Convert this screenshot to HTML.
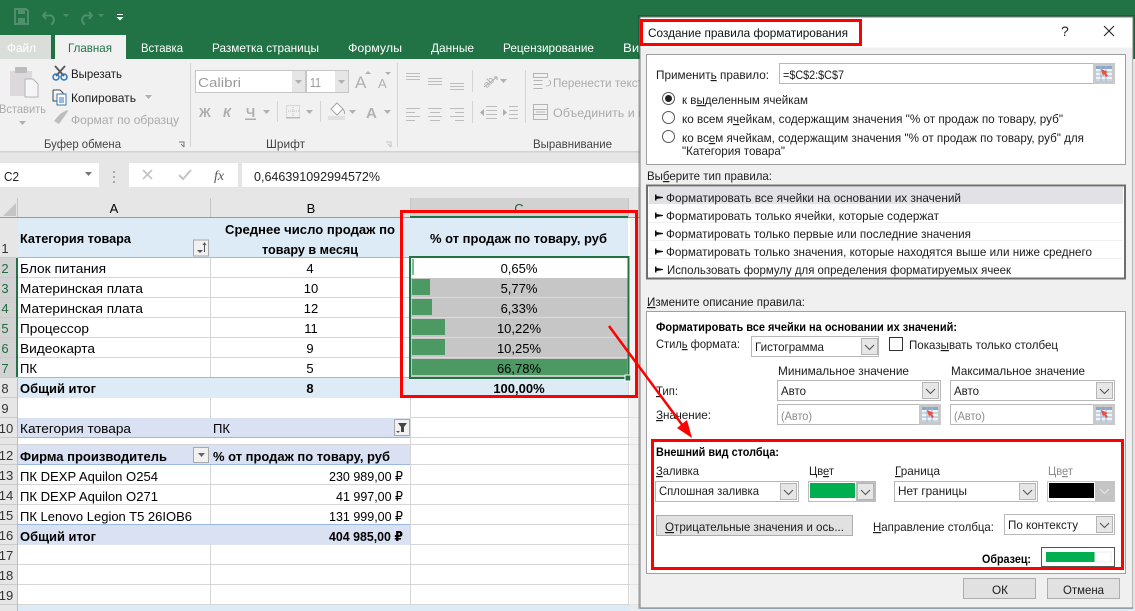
<!DOCTYPE html>
<html lang="ru"><head><meta charset="utf-8"><title>Создание правила форматирования</title>
<style>
html,body{margin:0;padding:0;background:#fff;overflow:hidden}
svg{display:block}
text{font-family:"Liberation Sans","DejaVu Sans",sans-serif;font-size:12px;fill:#1c1c1c}
.c{font-size:13px;fill:#000}
.b{font-size:13px;font-weight:bold;fill:#000}
.m{text-anchor:middle}
.db{font-weight:bold;fill:#000}
.rh{font-size:13px;fill:#333;text-anchor:middle}
.rs{font-size:13px;fill:#1e6b41;text-anchor:middle}
.tab{fill:#fff;font-size:12px}
.g{fill:#ababab}
.u{text-decoration:underline}
</style></head><body>
<svg width="1135" height="611" viewBox="0 0 1135 611" xmlns="http://www.w3.org/2000/svg">
<defs>
<symbol id="pick" width="22" height="21" viewBox="0 0 22 21"><rect width="22" height="21" fill="#c9c9c9"/><rect x="3" y="3" width="16" height="15" fill="#eef3f8"/><path d="M3 3h16v3H3z" fill="#8aa8cc"/><path d="M3 9h16M3 13h16M3 17h16M8 3v15M13 3v15" stroke="#9db6d4" stroke-width="1" fill="none"/><path d="M8 6l7 3-2 1 2 3-2 1-2-3-1 2z" fill="#e8503f"/></symbol>
<symbol id="chev" width="17" height="17" viewBox="0 0 17 17"><rect x=".5" y=".5" width="16" height="16" fill="#e6e6e6" stroke="#b5b5b5"/><path d="M4 7l4.500 4.500L13 7" stroke="#555" stroke-width="1.100" fill="none"/></symbol>
<symbol id="da" width="7" height="5" viewBox="0 0 7 5"><path d="M0 0h7L3.500 4z" fill="#b0b0b0"/></symbol>
<symbol id="fl" width="9" height="7" viewBox="0 0 9 7"><path d="M0 .5h1.500V2L8 3v1L1.500 5v1.500H0z" fill="#111"/></symbol>
</defs>

<!-- title/tab band -->
<rect width="1135" height="59" fill="#217346"/>
<path d="M15 9h11l2 2v13H15z" fill="none" stroke="#4f8f6e" stroke-width="2"/><rect x="18" y="9" width="7" height="5" fill="#4f8f6e"/><rect x="18" y="18" width="7" height="6" fill="#4f8f6e"/>
<path d="M46 12l-3 3.500 3 3.500M43.500 15.500H51a5 5 0 0 1 0 9" fill="none" stroke="#4f8f6e" stroke-width="2"/><path d="M63 14h6l-3 3z" fill="#4f8f6e"/>
<path d="M89 12l3 3.500-3 3.500M91.500 15.500H85a5 5 0 0 0 0 9" fill="none" stroke="#4f8f6e" stroke-width="2"/><path d="M98 14h6l-3 3z" fill="#4f8f6e"/>
<rect x="117" y="14" width="6" height="1" fill="#fff"/><path d="M116.500 17h7L120 20.500z" fill="#fff"/>
<rect x="0" y="35" width="51" height="24" fill="#d9dedb"/>
<text x="7" y="52" textLength="29" lengthAdjust="spacingAndGlyphs" style="fill:#fff">Файл</text>
<rect x="55" y="35" width="71" height="24" fill="#f1f1f1"/>
<text x="68" y="52" textLength="44" lengthAdjust="spacingAndGlyphs" style="fill:#217346">Главная</text>
<text class="tab" x="141" y="52" textLength="42" lengthAdjust="spacingAndGlyphs">Вставка</text>
<text class="tab" x="212" y="52" textLength="107" lengthAdjust="spacingAndGlyphs">Разметка страницы</text>
<text class="tab" x="348" y="52" textLength="54" lengthAdjust="spacingAndGlyphs">Формулы</text>
<text class="tab" x="431" y="52" textLength="43" lengthAdjust="spacingAndGlyphs">Данные</text>
<text class="tab" x="503" y="52" textLength="91" lengthAdjust="spacingAndGlyphs">Рецензирование</text>
<text class="tab" x="623" y="52" textLength="24" lengthAdjust="spacingAndGlyphs">Вид</text>

<!-- ribbon -->
<rect y="59" width="1135" height="93" fill="#f1f1f1"/>
<rect y="151" width="1135" height="1.500" fill="#d2d2d2"/>
<rect x="190" y="63" width="1" height="84" fill="#d4d4d4"/><rect x="397" y="63" width="1" height="84" fill="#d4d4d4"/>
<!-- clipboard -->
<rect x="10" y="71" width="22" height="25" fill="#dcd8dc"/><rect x="15" y="67" width="12" height="6" rx="1" fill="#bcbcbc"/><path d="M25 79h8l5 5v13H25z" fill="#f6f4f7" stroke="#b4b4b4"/>
<text x="-1" y="113" textLength="47" lengthAdjust="spacingAndGlyphs" class="g">Вставить</text>
<use href="#da" x="19" y="121"/>
<path d="M55 66l9 10M65 66l-9 10" stroke="#555" stroke-width="1.800"/><circle cx="56" cy="77" r="3" fill="none" stroke="#2f75b5" stroke-width="1.500"/><circle cx="64" cy="77" r="3" fill="none" stroke="#2f75b5" stroke-width="1.500"/>
<text x="71" y="78" textLength="51" lengthAdjust="spacingAndGlyphs">Вырезать</text>
<path d="M53 90h7l3 3v8" fill="#fff" stroke="#444"/><path d="M53 90v11h4" fill="none" stroke="#444"/><rect x="57" y="94" width="9" height="11" fill="#fff" stroke="#2f75b5"/><path d="M59 98h5M59 100h5M59 102h5" stroke="#2f75b5"/>
<text x="71" y="102" textLength="65" lengthAdjust="spacingAndGlyphs">Копировать</text>
<use href="#da" x="145" y="95"/>
<path d="M54 121l6-7 4 3-5 7zM60 114l7-4 1 1-4 6" fill="#bdbdbd"/>
<text x="71" y="124" textLength="108" lengthAdjust="spacingAndGlyphs" class="g">Формат по образцу</text>
<text x="44" y="148" textLength="77" lengthAdjust="spacingAndGlyphs" style="fill:#444">Буфер обмена</text>
<path d="M179 142h5v5M181 144l3 3" stroke="#777" fill="none"/>
<!-- font -->
<rect x="195.500" y="70.500" width="110" height="22" fill="#fff" stroke="#c6c6c6"/><rect x="292" y="71" width="13" height="21" fill="#e6e6e6"/><use href="#da" x="295" y="80"/>
<rect x="306.500" y="70.500" width="42" height="22" fill="#fff" stroke="#c6c6c6"/><rect x="335" y="71" width="13" height="21" fill="#e6e6e6"/><use href="#da" x="338" y="80"/>
<text x="198" y="87" textLength="43" lengthAdjust="spacingAndGlyphs" style="font-size:13px;fill:#999">Calibri</text>
<text x="310" y="87" textLength="11" lengthAdjust="spacingAndGlyphs" style="font-size:13px;fill:#999">11</text>
<text x="355" y="88" style="font-size:17px;fill:#b0b0b0">A</text><path d="M365 74h6l-3-3z" fill="#b0b0b0"/>
<text x="378" y="88" style="font-size:13px;fill:#b0b0b0">A</text><path d="M385 72h6l-3 3z" fill="#b0b0b0"/>
<text x="199" y="117" style="font-size:13px;font-weight:bold;fill:#adadad">Ж</text>
<text x="223" y="117" style="font-size:13px;font-weight:bold;font-style:italic;fill:#adadad">К</text>
<text x="246" y="117" style="font-size:13px;font-weight:bold;fill:#adadad">Ч</text><rect x="245" y="118.500" width="11" height="1.500" fill="#adadad"/>
<use href="#da" x="263" y="110"/><rect x="277" y="101" width="1" height="21" fill="#d4d4d4"/>
<rect x="286.500" y="105.500" width="13" height="12" fill="none" stroke="#c0c0c0" stroke-dasharray="1 1"/><path d="M293 105v13M286 111h14" stroke="#c0c0c0" stroke-dasharray="1 1"/><rect x="286" y="117" width="14" height="1.500" fill="#b8b8b8"/>
<use href="#da" x="306" y="110"/><rect x="320" y="101" width="1" height="21" fill="#d4d4d4"/>
<path d="M331 109l6-6 6 6-6 6z" fill="#fff" stroke="#a5a5a5"/><path d="M343 109c2 3 2 4 1 5" stroke="#a5a5a5" fill="none"/><rect x="328" y="116" width="17" height="4" fill="#e0e0e0"/>
<use href="#da" x="349" y="110"/>
<text x="366" y="118" style="font-size:15px;font-weight:bold;fill:#b2b2b2">A</text>
<use href="#da" x="384" y="110"/>
<text x="266" y="148" textLength="39" lengthAdjust="spacingAndGlyphs" style="fill:#444">Шрифт</text>
<path d="M386 142h5v5M388 144l3 3" stroke="#c4c4c4" fill="none"/>
<!-- alignment -->
<path d="M406 73.500h14M406 76.500h14M406 79.500h14M428 78.500h14M428 81.500h14M428 84.500h14M450 83.500h14M450 86.500h14M450 89.500h14" stroke="#bdbdbd"/>
<path d="M406 108.500h14M406 112.500h9M406 116.500h14M406 120.500h9M428 108.500h14M430 112.500h10M428 116.500h14M430 120.500h10M450 108.500h14M455 112.500h9M450 116.500h14M455 120.500h9" stroke="#bdbdbd"/>
<rect x="472" y="70" width="1" height="22" fill="#d4d4d4"/><rect x="472" y="101" width="1" height="22" fill="#d4d4d4"/>
<text x="481" y="86" transform="rotate(-45 487 80)" style="font-size:10px;fill:#adadad">ab</text><path d="M484 87l13-10m-3 0h3v3" stroke="#adadad" fill="none"/>
<use href="#da" x="500" y="79"/>
<path d="M486 106.500h11M486 110.500h11M486 114.500h11M486 118.500h11M509 106.500h9M509 110.500h9M509 114.500h9M509 118.500h9" stroke="#bdbdbd"/><path d="M484 109l-4 3.500 4 3.500zM503 109l4 3.500-4 3.500z" fill="#adadad"/>
<rect x="525" y="70" width="1" height="53" fill="#d4d4d4"/>
<path d="M533.500 73.500h14v4h-14zM533.500 80.500h9M533.500 84.500h9M533.500 88.500h9M549 80c3 2 2 6-3 6" fill="none" stroke="#b4b4b4"/>
<text x="553" y="87" textLength="90" lengthAdjust="spacingAndGlyphs" class="g">Перенести текст</text>
<rect x="533.500" y="104.500" width="14" height="15" fill="none" stroke="#b4b4b4"/><path d="M533.500 109.500h14M533.500 114.500h14M536 112h9" stroke="#b4b4b4"/>
<text x="553" y="117" textLength="92" lengthAdjust="spacingAndGlyphs" class="g">Объединить и п</text>
<text x="533" y="148" textLength="79" lengthAdjust="spacingAndGlyphs" style="fill:#444">Выравнивание</text>

<!-- formula bar -->
<rect y="152.500" width="1135" height="46" fill="#e6e6e6"/>
<rect x="0" y="163" width="99" height="24" fill="#fff"/>
<text x="4" y="181" textLength="15" lengthAdjust="spacingAndGlyphs" style="font-size:13px;fill:#222">C2</text>
<path d="M85 172h7l-3.500 4z" fill="#777"/>
<path d="M114 171v2M114 176v2M114 181v2" stroke="#aaa" stroke-width="2"/>
<rect x="129" y="163" width="109" height="24" fill="#fff"/>
<path d="M143 170l9 9M152 170l-9 9" stroke="#c4c4c4" stroke-width="1.700"/>
<path d="M179 175l4 4 8-9" stroke="#c4c4c4" stroke-width="2" fill="none"/>
<text x="214" y="180" style="font-family:'Liberation Serif',serif;font-size:14px;font-style:italic;fill:#555">fx</text>
<rect x="242" y="163" width="400" height="24" fill="#fff"/>
<text x="254" y="181" textLength="126" lengthAdjust="spacingAndGlyphs" style="font-size:13px;fill:#222">0,646391092994572%</text>

<!-- sheet -->
<rect y="198" width="1135" height="413" fill="#fff"/>
<rect y="198" width="18" height="413" fill="#e6e6e6"/>
<rect x="18" y="198" width="392" height="20" fill="#e6e6e6"/><rect x="410" y="198" width="218" height="20" fill="#d2d2d2"/><rect x="628" y="198" width="12" height="20" fill="#e6e6e6"/>
<path d="M3 216l13-13v13z" fill="#c4c4c4"/>
<path d="M17.500 198v20M210.500 198v20M410.500 198v20M628.500 198v20" stroke="#c6c6c6"/>
<rect y="217" width="640" height="1" fill="#9a9a9a"/>
<text x="114" y="213" class="c m">A</text><text x="311" y="213" class="c m">B</text><text x="519" y="213" class="c m" style="fill:#1e5c3a">C</text>
<rect x="410" y="216" width="218" height="2" fill="#217346"/>
<!-- row header highlight -->
<rect y="258" width="17" height="120" fill="#d2d2d2"/><rect x="16" y="258" width="2" height="120" fill="#217346"/>
<!-- fills -->
<rect x="18" y="218" width="610" height="40" fill="#ddebf7"/><rect x="18" y="378" width="610" height="20" fill="#ddebf7"/>
<rect x="18" y="418" width="392" height="20" fill="#d9e1f2"/><rect x="18" y="445" width="392" height="20" fill="#d9e1f2"/><rect x="18" y="525" width="392" height="20" fill="#d9e1f2"/>
<rect x="18" y="605" width="1117" height="6" fill="#ddebf7"/>
<!-- grid -->
<path d="M18 277.500H410M18 297.500H410M18 317.500H410M18 337.500H410M18 357.500H410M210.500 258v120M210.500 398v20M18 484.500H410M18 504.500H410M210.500 465v60M18 564.500H640M18 584.500H640M18 604.500H640M210.500 545v60M410.500 398v207M628.500 258v347M410 417.500H640M410 437.500H640M410 444.500H640M410 464.500H640M410 484.500H640M410 504.500H640M410 524.500H640M410 544.500H640M18 444.500H410" stroke="#d6d6d6"/>
<path d="M18 257.500H628M18 377.500H628M18 437.500H410M18 464.500H410M18 524.500H410" stroke="#9bb9e0"/>
<path d="M0 277.500H16M0 297.500H16M0 317.500H16M0 337.500H16M0 357.500H16M0 377.500H18M0 397.500H18M0 417.500H18M0 437.500H18M0 444.500H18M0 464.500H18M0 484.500H18M0 504.500H18M0 524.500H18M0 544.500H18M0 564.500H18M0 584.500H18M0 604.500H18M0 257.500H18" stroke="#cbcbcb"/>
<path d="M17.500 378V611" stroke="#bdbdbd"/>
<!-- row numbers -->
<text x="5" y="253" class="rh">1</text><text x="5" y="273" class="rs">2</text><text x="5" y="293" class="rs">3</text><text x="5" y="313" class="rs">4</text><text x="5" y="333" class="rs">5</text><text x="5" y="353" class="rs">6</text><text x="5" y="373" class="rs">7</text><text x="5" y="393" class="rh">8</text><text x="5" y="413" class="rh">9</text>
<text x="6" y="433" class="rh">10</text><text x="6" y="460" class="rh">12</text><text x="6" y="480" class="rh">13</text><text x="6" y="500" class="rh">14</text><text x="6" y="520" class="rh">15</text><text x="6" y="540" class="rh">16</text><text x="6" y="560" class="rh">17</text><text x="6" y="580" class="rh">18</text><text x="6" y="600" class="rh">19</text>
<!-- table 1 text -->
<text x="20" y="243" textLength="111" lengthAdjust="spacingAndGlyphs" class="b">Категория товара</text>
<rect x="193.500" y="240" width="15" height="16" fill="#f1f1f1" stroke="#a8a8a8"/><path d="M197 250h6l-3 3z" fill="#555"/><path d="M204.500 243v9M203 245l1.500-2 1.500 2" stroke="#555" fill="none"/>
<text x="225" y="234" textLength="170" lengthAdjust="spacingAndGlyphs" class="b">Среднее число продаж по</text>
<text x="262" y="254" textLength="96" lengthAdjust="spacingAndGlyphs" class="b">товару в месяц</text>
<text x="430" y="243" textLength="177" lengthAdjust="spacingAndGlyphs" class="b">% от продаж по товару, руб</text>
<text x="20" y="273" textLength="86" lengthAdjust="spacingAndGlyphs" class="c">Блок питания</text><text x="310" y="273" class="c m">4</text>
<text x="20" y="293" textLength="123" lengthAdjust="spacingAndGlyphs" class="c">Материнская плата</text><text x="311" y="293" class="c m">10</text>
<text x="20" y="313" textLength="123" lengthAdjust="spacingAndGlyphs" class="c">Материнская плата</text><text x="311" y="313" class="c m">12</text>
<text x="20" y="333" textLength="69" lengthAdjust="spacingAndGlyphs" class="c">Процессор</text><text x="311" y="333" class="c m">11</text>
<text x="20" y="353" textLength="75" lengthAdjust="spacingAndGlyphs" class="c">Видеокарта</text><text x="310" y="353" class="c m">9</text>
<text x="20" y="373" textLength="17" lengthAdjust="spacingAndGlyphs" class="c">ПК</text><text x="310" y="373" class="c m">5</text>
<text x="20" y="393" textLength="76" lengthAdjust="spacingAndGlyphs" class="b">Общий итог</text><text x="310" y="393" class="b m">8</text>
<!-- data bars -->
<rect x="411" y="278" width="217" height="100" fill="#c6c6c6"/>
<path d="M411 297.500h217M411 317.500h217M411 337.500h217M411 357.500h217" stroke="#dcdcdc"/>
<rect x="412" y="259" width="2" height="16" fill="#74c08f"/>
<rect x="412" y="279" width="18" height="16" fill="#4c9963"/><rect x="412" y="299" width="20" height="16" fill="#4c9963"/><rect x="412" y="319" width="33" height="16" fill="#4c9963"/><rect x="412" y="339" width="33" height="16" fill="#4c9963"/><rect x="412" y="359" width="215" height="16" fill="#4c9963"/>
<rect x="410" y="257" width="218.500" height="121" fill="none" stroke="#217346" stroke-width="2"/>
<rect x="625" y="375" width="6" height="6" fill="#217346" stroke="#fff" stroke-width="1"/>
<text x="519" y="273" class="c m">0,65%</text><text x="519" y="293" class="c m">5,77%</text><text x="519" y="313" class="c m">6,33%</text><text x="519" y="333" class="c m">10,22%</text><text x="519" y="353" class="c m">10,25%</text><text x="519" y="373" class="c m">66,78%</text><text x="519" y="393" class="b m">100,00%</text>
<!-- table 2 -->
<text x="20" y="433" textLength="111" lengthAdjust="spacingAndGlyphs" class="c">Категория товара</text>
<text x="213" y="433" textLength="17" lengthAdjust="spacingAndGlyphs" class="c">ПК</text>
<rect x="394.500" y="419.500" width="15" height="16" fill="#f1f1f1" stroke="#a8a8a8"/><path d="M398 423h9l-3 4v5h-3v-5z" fill="#444"/><path d="M396 431h4l-2 2z" fill="#555"/>
<text x="20" y="461" textLength="147" lengthAdjust="spacingAndGlyphs" class="b">Фирма производитель</text>
<rect x="193.500" y="447.500" width="15" height="15" fill="#f1f1f1" stroke="#a8a8a8"/><path d="M198 453h7l-3.500 4z" fill="#666"/>
<text x="213" y="461" textLength="177" lengthAdjust="spacingAndGlyphs" class="b">% от продаж по товару, руб</text>
<text x="20" y="481" textLength="138" lengthAdjust="spacingAndGlyphs" class="c">ПК DEXP Aquilon O254</text><text x="329" y="481" textLength="74" lengthAdjust="spacingAndGlyphs" class="c">230 989,00 ₽</text>
<text x="20" y="501" textLength="138" lengthAdjust="spacingAndGlyphs" class="c">ПК DEXP Aquilon O271</text><text x="336" y="501" textLength="67" lengthAdjust="spacingAndGlyphs" class="c">41 997,00 ₽</text>
<text x="20" y="521" textLength="172" lengthAdjust="spacingAndGlyphs" class="c">ПК Lenovo Legion T5 26IOB6</text><text x="329" y="521" textLength="74" lengthAdjust="spacingAndGlyphs" class="c">131 999,00 ₽</text>
<text x="20" y="541" textLength="76" lengthAdjust="spacingAndGlyphs" class="b">Общий итог</text><text x="329" y="541" textLength="74" lengthAdjust="spacingAndGlyphs" class="b">404 985,00 ₽</text>
<rect x="630" y="218" width="10" height="393" fill="#ececec" opacity=".65"/>

<!-- red rect sheet -->
<rect x="401.500" y="211.500" width="235" height="185" fill="none" stroke="#f00" stroke-width="3"/>

<!-- dialog -->
<rect x="638" y="15" width="497" height="594" fill="#000" opacity=".18"/>
<rect x="640" y="17" width="493" height="591" fill="#f0f0f0" stroke="#7c7c7c" stroke-width="1"/>
<rect x="640.500" y="17.500" width="492" height="30" fill="#fff"/>
<rect x="1133" y="59" width="2" height="550" fill="#e4e4e4"/>
<text x="648" y="37" textLength="200" lengthAdjust="spacingAndGlyphs" style="fill:#111">Создание правила форматирования</text>
<rect x="641.500" y="20.500" width="219" height="24" fill="none" stroke="#f00" stroke-width="3"/>
<text x="1061" y="36" style="font-size:14px;fill:#222">?</text>
<path d="M1104 26l10 10M1114 26l-10 10" stroke="#222" stroke-width="1.100"/>

<rect x="646.500" y="54.500" width="479" height="110" fill="#fff" stroke="#a0a0a0"/>
<text x="656" y="79" textLength="113" lengthAdjust="spacingAndGlyphs">Применит<tspan class="u">ь</tspan> правило:</text>
<rect x="779.500" y="63.500" width="335" height="20" fill="#fff" stroke="#b8b8b8"/>
<text x="783" y="79" textLength="61" lengthAdjust="spacingAndGlyphs">=$C$2:$C$7</text>
<use href="#pick" x="1093" y="63"/>
<circle cx="668.500" cy="98.500" r="6" fill="#fff" stroke="#555"/><circle cx="668.500" cy="98.500" r="3.500" fill="#222"/>
<circle cx="668.500" cy="117.500" r="6" fill="#fff" stroke="#555"/><circle cx="668.500" cy="136.500" r="6" fill="#fff" stroke="#555"/>
<text x="682" y="104" textLength="126" lengthAdjust="spacingAndGlyphs">к в<tspan class="u">ы</tspan>деленным ячейкам</text>
<text x="682" y="123" textLength="381" lengthAdjust="spacingAndGlyphs">ко всем я<tspan class="u">ч</tspan>ейкам, содержащим значения "% от продаж по товару, руб"</text>
<text x="682" y="142" textLength="402" lengthAdjust="spacingAndGlyphs">ко вс<tspan class="u">е</tspan>м ячейкам, содержащим значения "% от продаж по товару, руб" для</text>
<text x="682" y="155" textLength="103" lengthAdjust="spacingAndGlyphs">"Категория товара"</text>

<text x="647" y="180" textLength="125" lengthAdjust="spacingAndGlyphs">Вы<tspan class="u">б</tspan>ерите тип правила:</text>
<rect x="647" y="185.500" width="478" height="93" fill="#fff" stroke="#6e6e6e" stroke-width="2"/>
<rect x="649" y="187" width="474" height="17" fill="#e1e1e6"/>
<path d="M649 222.500h474M649 240.500h474M649 258.500h474" stroke="#f0f0f0"/>
<use href="#fl" x="655" y="194"/><use href="#fl" x="655" y="212"/><use href="#fl" x="655" y="230"/><use href="#fl" x="655" y="248"/><use href="#fl" x="655" y="266"/>
<text x="666" y="202" textLength="295" lengthAdjust="spacingAndGlyphs">Форматировать все ячейки на основании их значений</text>
<text x="666" y="220" textLength="273" lengthAdjust="spacingAndGlyphs">Форматировать только ячейки, которые содержат</text>
<text x="666" y="238" textLength="305" lengthAdjust="spacingAndGlyphs">Форматировать только первые или последние значения</text>
<text x="666" y="256" textLength="426" lengthAdjust="spacingAndGlyphs">Форматировать только значения, которые находятся выше или ниже среднего</text>
<text x="667" y="274" textLength="344" lengthAdjust="spacingAndGlyphs">Использовать формулу для определения форматируемых ячеек</text>

<text x="647" y="306" textLength="158" lengthAdjust="spacingAndGlyphs"><tspan class="u">И</tspan>змените описание правила:</text>
<rect x="646.500" y="311.500" width="479" height="262" fill="#fff" stroke="#a0a0a0"/>
<text x="656" y="331" textLength="301" lengthAdjust="spacingAndGlyphs" class="db">Форматировать все ячейки на основании их значений:</text>
<text x="656" y="348" textLength="84" lengthAdjust="spacingAndGlyphs">Стил<tspan class="u">ь</tspan> формата:</text>
<rect x="751.500" y="336.500" width="127" height="20" fill="#fff" stroke="#b8b8b8"/><text x="755" y="351" textLength="69" lengthAdjust="spacingAndGlyphs">Гистограмма</text><use href="#chev" x="861" y="338"/>
<rect x="889.500" y="337.500" width="13" height="13" fill="#fff" stroke="#333"/>
<text x="909" y="349" textLength="149" lengthAdjust="spacingAndGlyphs">Показ<tspan class="u">ы</tspan>вать только столбец</text>
<text x="778" y="375" textLength="131" lengthAdjust="spacingAndGlyphs">Минимальное значение</text>
<text x="951" y="375" textLength="134" lengthAdjust="spacingAndGlyphs">Максимальное значение</text>
<text x="656" y="395" textLength="22" lengthAdjust="spacingAndGlyphs"><tspan class="u">Т</tspan>ип:</text>
<rect x="777.500" y="380.500" width="163" height="20" fill="#fff" stroke="#b8b8b8"/><text x="781" y="395" textLength="25" lengthAdjust="spacingAndGlyphs">Авто</text><use href="#chev" x="922" y="382"/>
<rect x="950.500" y="380.500" width="164" height="20" fill="#fff" stroke="#b8b8b8"/><text x="954" y="395" textLength="25" lengthAdjust="spacingAndGlyphs">Авто</text><use href="#chev" x="1096" y="382"/>
<text x="656" y="419" textLength="55" lengthAdjust="spacingAndGlyphs"><tspan class="u">З</tspan>начение:</text>
<rect x="777.500" y="404.500" width="163" height="20" fill="#fff" stroke="#b8b8b8"/><text x="781" y="420" textLength="31" lengthAdjust="spacingAndGlyphs" style="fill:#8a8a8a">(Авто)</text><use href="#pick" x="919" y="404"/>
<rect x="950.500" y="404.500" width="164" height="20" fill="#fff" stroke="#b8b8b8"/><text x="954" y="420" textLength="31" lengthAdjust="spacingAndGlyphs" style="fill:#8a8a8a">(Авто)</text><use href="#pick" x="1093" y="404"/>

<text x="656" y="456" textLength="123" lengthAdjust="spacingAndGlyphs" class="db">Внешний вид столбца:</text>
<text x="656" y="475" textLength="43" lengthAdjust="spacingAndGlyphs"><tspan class="u">З</tspan>аливка</text>
<text x="809" y="475" textLength="25" lengthAdjust="spacingAndGlyphs">Цв<tspan class="u">е</tspan>т</text>
<text x="895" y="475" textLength="45" lengthAdjust="spacingAndGlyphs"><tspan class="u">Г</tspan>раница</text>
<text x="1048" y="475" textLength="25" lengthAdjust="spacingAndGlyphs" style="fill:#8a8a8a">Цв<tspan class="u">е</tspan>т</text>
<rect x="655.500" y="481.500" width="143" height="20" fill="#fff" stroke="#b8b8b8"/><text x="659" y="495" textLength="100" lengthAdjust="spacingAndGlyphs">Сплошная заливка</text><use href="#chev" x="780" y="483"/>
<rect x="808" y="481" width="68" height="21" fill="#bdbdbd"/><rect x="809" y="482" width="47" height="19" fill="#fff"/><rect x="810" y="483" width="45" height="15" fill="#00b050"/><use href="#chev" x="857" y="483"/>
<rect x="894.500" y="481.500" width="143" height="20" fill="#fff" stroke="#b8b8b8"/><text x="898" y="495" textLength="69" lengthAdjust="spacingAndGlyphs">Нет границы</text><use href="#chev" x="1019" y="483"/>
<rect x="1047" y="481" width="68" height="21" fill="#c4c4c4"/><rect x="1048" y="482" width="47" height="19" fill="#fff"/><rect x="1049" y="483" width="45" height="15" fill="#000"/><path d="M1100 489l4.500 4.500 4.500-4.500" stroke="#e8e8e8" stroke-width="1.100" fill="none"/>
<rect x="656.500" y="515.500" width="196" height="20" fill="#e1e1e1" stroke="#adadad"/><text x="665" y="531" textLength="179" lengthAdjust="spacingAndGlyphs"><tspan class="u">О</tspan>трицательные значения и ось...</text>
<text x="873" y="531" textLength="121" lengthAdjust="spacingAndGlyphs"><tspan class="u">Н</tspan>аправление столбца:</text>
<rect x="1004.500" y="514.500" width="110" height="20" fill="#fff" stroke="#b8b8b8"/><text x="1008" y="529" textLength="70" lengthAdjust="spacingAndGlyphs">По контексту</text><use href="#chev" x="1096" y="516"/>
<text x="982" y="563" textLength="49" lengthAdjust="spacingAndGlyphs" class="db">Образец:</text>
<rect x="1041.500" y="547.500" width="73" height="19" fill="#fff" stroke="#555"/><rect x="1046" y="552" width="49" height="10" fill="#00b050"/><rect x="1095" y="552" width="16" height="10" fill="#fff" stroke="#eee"/>
<rect x="652.500" y="440.500" width="470" height="128" fill="none" stroke="#f00" stroke-width="3"/>
<rect x="963.500" y="578.500" width="72" height="20" fill="#e1e1e1" stroke="#adadad"/><text x="992" y="594" textLength="16" lengthAdjust="spacingAndGlyphs">ОК</text>
<rect x="1047.500" y="578.500" width="72" height="20" fill="#e1e1e1" stroke="#adadad"/><text x="1063" y="594" textLength="41" lengthAdjust="spacingAndGlyphs">Отмена</text>

<!-- arrow -->
<path d="M609 326L686 430" stroke="#f00" stroke-width="2.500" fill="none"/>
<path d="M692 438L677 428l10-8z" fill="#f00"/>
</svg>
</body></html>
